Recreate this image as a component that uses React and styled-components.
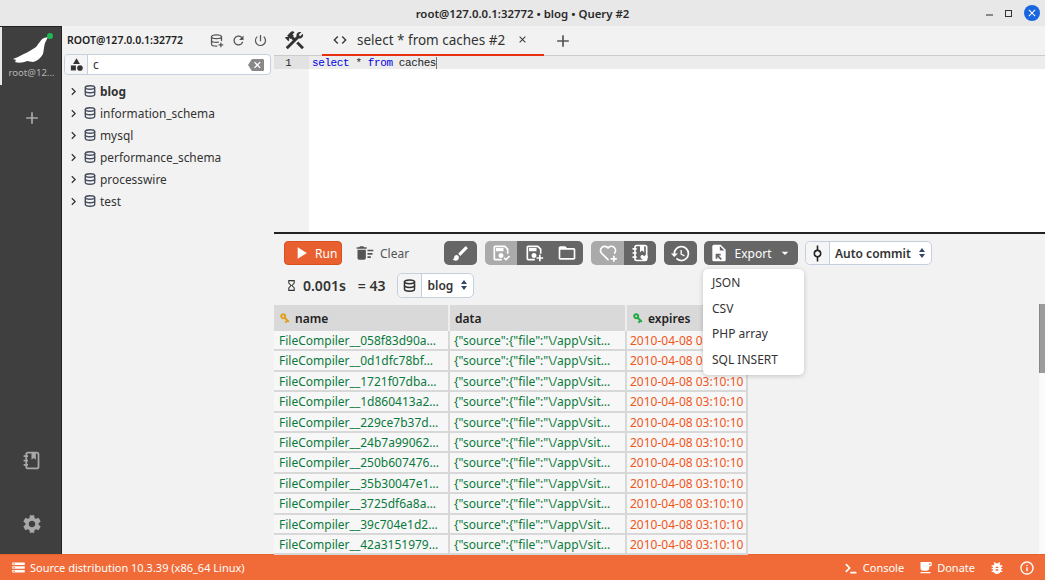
import React from 'react';
import styled, { createGlobalStyle } from 'styled-components';
import {
    MdCategory, MdBackspace, MdRefresh, MdPowerSettingsNew, MdConstruction, MdClose, MdCode, MdAdd,
    MdPlayArrow, MdDeleteSweep, MdBrush, MdOutlineFolderOpen, MdHistory, MdCommit,
    MdVpnKey, MdSettings, MdLocalCafe, MdBugReport, MdInfoOutline, MdChevronRight, MdArrowDropDown,
    MdHourglassEmpty, MdStorage,
} from 'react-icons/md';
import { TbDatabasePlus, TbDatabase, TbHeartPlus, TbTerminal } from 'react-icons/tb';

const GlobalStyle = createGlobalStyle`
    html, body { margin: 0; padding: 0; height: 100%; overflow: hidden; }
    body { font-family: "Noto Sans", sans-serif; color: #222; }
    * { box-sizing: border-box; }
`;

const Window = styled.div`
    width: 1045px;
    height: 580px;
    display: flex;
    flex-direction: column;
    background: #f2f2f2;
`;
const TitleBar = styled.div`
    height: 26px;
    flex: none;
    background: #e8e8e8;
    display: flex;
    align-items: center;
    justify-content: center;
    position: relative;
    font-size: 11.4px;
    font-weight: 600;
    color: #2a2a2a;
`;
const WinButtons = styled.div`
    position: absolute;
    right: 5px;
    top: 5px;
    display: flex;
    align-items: center;
    gap: 12px;
`;
const WinMin = styled.span`
    width: 7px;
    height: 2px;
    margin-top: 3px;
    background: #888;
`;
const WinMax = styled.span`
    width: 7px;
    height: 7px;
    border: 1.5px solid #333;
`;
const WinClose = styled.span`
    width: 16px;
    height: 16px;
    border-radius: 50%;
    background: #1a66e0;
    color: #fff;
    display: flex;
    align-items: center;
    justify-content: center;
`;
const Main = styled.div`
    flex: 1;
    min-height: 0;
    display: flex;
`;
const Rail = styled.div`
    width: 62px;
    flex: none;
    background: #3f3f3f;
    border-right: 1px solid #222;
    border-top: 1px solid #222;
    display: flex;
    flex-direction: column;
    align-items: center;
    color: #999;
`;
const RailConn = styled.div`
    width: 100%;
    height: 58px;
    border-left: 2px solid #e8e8e8;
    position: relative;
    display: flex;
    flex-direction: column;
    align-items: center;
    padding-top: 9px;
`;
const RailLabel = styled.div`
    font-size: 9.6px;
    color: #b5b5b5;
    margin-top: 2px;
`;
const OnlineDot = styled.span`
    position: absolute;
    top: 6px;
    left: 45px;
    width: 6px;
    height: 6px;
    border-radius: 50%;
    background: #1db954;
`;
const RailAdd = styled.div`
    margin: 23px 0 0 2px;
    color: #aaa;
    display: flex;
`;
const Spacer = styled.div`
    flex: 1;
`;
const RailIcon = styled.div`
    display: flex;
    margin: 0 0 ${p => p.$mb}px 2px;
    color: #a8a8a8;
`;
const Panel = styled.div`
    width: 212px;
    flex: none;
    display: flex;
    flex-direction: column;
    background: #f2f2f2;
`;
const PanelHead = styled.div`
    height: 28px;
    display: flex;
    align-items: center;
    padding: 0 6px 0 5px;
    font-size: 10.5px;
    font-weight: 600;
    color: #222;
`;
const PanelTitle = styled.div`
    flex: 1;
`;
const PanelTools = styled.div`
    display: flex;
    gap: 7px;
    color: #555;
`;
const Search = styled.div`
    height: 21px;
    margin: 0 3px 0 2px;
    border: 1px solid #c5d0de;
    border-radius: 4px;
    background: #fff;
    display: flex;
    align-items: center;
`;
const SearchAddon = styled.div`
    width: 23px;
    height: 100%;
    border-right: 1px solid #c5d0de;
    background: #f5f5f5;
    border-radius: 4px 0 0 4px;
    display: flex;
    align-items: center;
    justify-content: center;
    color: #333;
`;
const SearchValue = styled.div`
    flex: 1;
    padding-left: 5px;
    font-size: 12px;
    color: #333;
`;
const SearchClear = styled.div`
    display: flex;
    margin-right: 6px;
    color: #888;
`;
const DbList = styled.div`
    padding-top: 5px;
`;
const DbRow = styled.div`
    height: 22px;
    display: flex;
    align-items: center;
    padding-left: 4px;
    font-size: 11.9px;
    font-weight: ${p => (p.$bold ? 700 : 400)};
    color: #333;
`;
const DbIcon = styled.span`
    display: flex;
    margin: 0 3px 0 2px;
    color: #454d5d;
`;
const Content = styled.div`
    flex: 1;
    min-width: 0;
    display: flex;
    flex-direction: column;
    position: relative;
`;
const TabBar = styled.div`
    height: 30px;
    flex: none;
    display: flex;
    align-items: center;
    background: #f2f2f2;
    border-bottom: 1px solid #ccc;
`;
const ToolsTab = styled.div`
    width: 48px;
    padding-left: 9px;
    display: flex;
    color: #333;
`;
const QueryTab = styled.div`
    width: 222px;
    height: 30px;
    display: flex;
    align-items: center;
    border-bottom: 2px solid #e8320f;
    font-size: 13.5px;
    color: #333;
`;
const TabCode = styled.span`
    display: flex;
    margin: 0 9px 0 10px;
`;
const TabClose = styled.span`
    display: flex;
    margin-left: 12px;
    color: #333;
`;
const TabAdd = styled.div`
    display: flex;
    margin-left: 9px;
    color: #555;
`;
const Editor = styled.div`
    height: 178px;
    flex: none;
    background: #fff;
    display: flex;
    border-bottom: 2px solid #222;
`;
const Gutter = styled.div`
    width: 35px;
    background: #f2f2f2;
`;
const GutterLine = styled.div`
    height: 13px;
    background: #e2e2e2;
    text-align: center;
    padding-right: 6px;
    font-family: "Liberation Mono", monospace;
    font-size: 10.5px;
    line-height: 14px;
`;
const Code = styled.div`
    flex: 1;
`;
const CodeLine = styled.div`
    height: 13px;
    background: #ececec;
    padding-left: 3px;
    font-family: "Liberation Mono", monospace;
    font-size: 11px;
    letter-spacing: -0.4px;
    line-height: 15px;
    color: #222;
`;
const Keyword = styled.span`
    color: #0000e0;
`;
const Caret = styled.span`
    border-right: 1px solid #777;
`;
const Toolbar = styled.div`
    height: 38px;
    flex: none;
    display: flex;
    align-items: center;
    padding-left: 10px;
`;
const RunButton = styled.div`
    width: 58px;
    height: 24px;
    border-radius: 4px;
    background: #e8602f;
    border: 1px solid #d8501f;
    color: #fff;
    display: flex;
    align-items: center;
    padding-left: 6px;
    gap: 4px;
    font-size: 12px;
`;
const ClearButton = styled.div`
    display: flex;
    align-items: center;
    gap: 5px;
    margin-left: 13px;
    font-size: 12px;
    color: #555;
    width: 89px;
`;
const Group = styled.div`
    display: flex;
    margin-right: ${p => p.$mr ?? 8}px;
`;
const IconButton = styled.div`
    height: 24px;
    width: ${p => p.$w}px;
    background: ${p => (p.$off ? '#aaaaaa' : '#666666')};
    color: #fff;
    display: flex;
    align-items: center;
    justify-content: center;
    gap: 6px;
    font-size: 12px;
    &:first-child { border-radius: 5px 0 0 5px; }
    &:last-child { border-radius: 0 5px 5px 0; }
    &:only-child { border-radius: 5px; }
`;
const SelectGroup = styled.div`
    height: ${p => p.$h}px;
    display: flex;
    align-items: center;
    border: 1px solid #c5d0de;
    border-radius: 5px;
    background: #fff;
`;
const SelectAddon = styled.div`
    width: 24px;
    height: 100%;
    background: #f5f5f5;
    border-right: 1px solid #c5d0de;
    border-radius: 5px 0 0 5px;
    display: flex;
    align-items: center;
    justify-content: center;
`;
const SelectValue = styled.div`
    display: flex;
    align-items: center;
    padding: 0 5px 0 5px;
    font-size: 12px;
    font-weight: 600;
    gap: ${p => p.$gap}px;
    color: #333;
`;
const Vertical = styled.span`
    display: flex;
    transform: rotate(90deg);
`;
const MetaRow = styled.div`
    height: 26px;
    margin-bottom: 7px;
    flex: none;
    display: flex;
    align-items: center;
    padding-left: 11px;
    font-size: 14px;
    font-weight: 600;
    color: #333;
`;
const MetaItem = styled.div`
    display: flex;
    align-items: center;
    gap: ${p => p.$gap}px;
    margin-right: 12px;
`;
const Grid = styled.div`
    display: grid;
    grid-template-columns: 176px 177px 121px;
    width: 474px;
`;
const HeadCell = styled.div`
    height: 26px;
    background: #d9d9d9;
    border-right: 2px solid #eee;
    display: flex;
    align-items: center;
    gap: 4px;
    padding-left: 5px;
    font-size: 12px;
    font-weight: 600;
    color: #222;
    &:last-child { border-right: none; }
`;
const KeyIcon = styled.span`
    display: flex;
    color: ${p => p.$color};
    transform: rotate(45deg);
`;
const Cell = styled.div`
    height: 20.4px;
    line-height: 20px;
    background: #f7f7f7;
    border-right: 2px solid #d8d8d8;
    border-bottom: 2px solid #d8d8d8;
    padding-left: ${p => p.$pad ?? 5}px;
    font-size: 12px;
    white-space: nowrap;
    overflow: hidden;
    color: ${p => p.$color};
`;
const Menu = styled.div`
    position: absolute;
    left: 429px;
    top: 243px;
    width: 101px;
    height: 106px;
    background: #fff;
    border-radius: 5px;
    box-shadow: 0 1px 5px rgba(0, 0, 0, 0.2);
    padding-top: 1px;
    z-index: 2;
`;
const MenuItem = styled.div`
    height: 25.5px;
    line-height: 25.5px;
    padding-left: 9px;
    font-size: 12px;
    color: #333;
`;
const ScrollTrack = styled.div`
    position: absolute;
    right: 0;
    top: 278px;
    bottom: 0;
    width: 6px;
    background: #fafafa;
`;
const ScrollThumb = styled.div`
    height: 69px;
    background: #9c9c9c;
    border-left: 1px solid #888;
`;
const StatusBar = styled.div`
    height: 26px;
    flex: none;
    background: #f06b37;
    border-top: 1px solid #e8602f;
    color: #fff;
    display: flex;
    align-items: center;
    padding: 0 10px 0 11px;
    font-size: 11px;
`;
const StatusItem = styled.div`
    display: flex;
    align-items: center;
    gap: ${p => p.$gap ?? 4}px;
    margin-left: ${p => p.$ml ?? 0}px;
`;

const Seal = () => (
    <svg width="38" height="28" viewBox="0 0 38 28">
        <path fill="#fff" d="M0 23 5 21C10 18 18 15 23 11 26 8 27 4 31 2L35 1 33 5C31 8 31 14 30 18 28 22 24 25 20 26L14 25C10 27 5 27 2 26L3 24Z" />
    </svg>
);

// floppy with a small mark in the corner, check or plus
const SaveIcon = ({ mark }) => (
    <svg width="20" height="20" viewBox="0 0 24 24" fill="currentColor">
        <path d="M17 3H5C3.89 3 3 3.9 3 5V19C3 20.1 3.89 21 5 21H13V19H5V5H16.17L19 7.83V13H21V7L17 3M6 6H15V10H6V6M12 12C10.34 12 9 13.34 9 15S10.34 18 12 18 15 16.66 15 15 13.66 12 12 12Z" />
        {mark === 'plus'
            ? <path d="M18 14H20V17H23V19H20V22H18V19H15V17H18Z" />
            : <path d="M15 18.5 16.4 17 18 18.6 21.6 15 23 16.4 18 21.4Z" />}
    </svg>
);

const NotebookIcon = ({ filled, size }) => (
    <svg width={size} height={size} viewBox="0 0 24 24" fill="none" stroke="currentColor" strokeWidth="2">
        <rect x="6" y="3" width="14" height="18" rx="2" />
        <path d="M3 7H8M3 12H8M3 17H8" />
        <path fill="currentColor" stroke="none" d="M12 3H17V11L14.5 9 12 11Z" />
        {filled && <path fill="currentColor" stroke="none" d="M17 22 13 18C11.5 16 14 13.500 16 15L17 16 18 15C20 13.500 22.500 16 21 18Z" />}
    </svg>
);

const ExportIcon = () => (
    <svg width="20" height="20" viewBox="0 0 24 24">
        <path fill="#fff" d="M6 2C4.9 2 4 2.9 4 4V20C4 21.1 4.9 22 6 22H18C19.1 22 20 21.1 20 20V8L14 2H6Z" />
        <path fill="#666" d="M13 3.500 18.500 9H13ZM14 13V15H11.500L15.500 19 14 20.500 10 16.500V19H8V13Z" />
    </svg>
);

const SelectCarets = () => (
    <svg width="8" height="12" viewBox="0 0 8 12" fill="#34466a">
        <path d="M4 1 7 5H1ZM4 11 1 7H7Z" />
    </svg>
);

const databases = [
    { name: 'blog', bold: true },
    { name: 'information_schema' },
    { name: 'mysql' },
    { name: 'performance_schema' },
    { name: 'processwire' },
    { name: 'test' },
];
const hashes = ['058f83d90a', '0d1dfc78bf', '1721f07dba', '1d860413a2', '229ce7b37d', '24b7a99062', '250b607476', '35b30047e1', '3725df6a8a', '39c704e1d2', '42a3151979'];
const exportFormats = ['JSON', 'CSV', 'PHP array', 'SQL INSERT'];

const App = () => (
    <Window>
        <GlobalStyle />
        <TitleBar>
            root@127.0.0.1:32772 • blog • Query #2
            <WinButtons>
                <WinMin />
                <WinMax />
                <WinClose><MdClose size={12} /></WinClose>
            </WinButtons>
        </TitleBar>
        <Main>
            <Rail>
                <RailConn>
                    <Seal />
                    <OnlineDot />
                    <RailLabel>root@12...</RailLabel>
                </RailConn>
                <RailAdd><MdAdd size={20} /></RailAdd>
                <Spacer />
                <RailIcon $mb={42}><NotebookIcon size={21} /></RailIcon>
                <RailIcon $mb={19}><MdSettings size={22} /></RailIcon>
            </Rail>
            <Panel>
                <PanelHead>
                    <PanelTitle>ROOT@127.0.0.1:32772</PanelTitle>
                    <PanelTools>
                        <TbDatabasePlus size={15} />
                        <MdRefresh size={15} />
                        <MdPowerSettingsNew size={15} />
                    </PanelTools>
                </PanelHead>
                <Search>
                    <SearchAddon><MdCategory size={15} /></SearchAddon>
                    <SearchValue>c</SearchValue>
                    <SearchClear><MdBackspace size={16} /></SearchClear>
                </Search>
                <DbList>
                    {databases.map(db => (
                        <DbRow key={db.name} $bold={db.bold}>
                            <MdChevronRight size={15} />
                            <DbIcon><TbDatabase size={14} strokeWidth={2.4} /></DbIcon>
                            {db.name}
                        </DbRow>
                    ))}
                </DbList>
            </Panel>
            <Content>
                <TabBar>
                    <ToolsTab><MdConstruction size={23} /></ToolsTab>
                    <QueryTab>
                        <TabCode><MdCode size={16} /></TabCode>
                        select * from caches #2
                        <TabClose><MdClose size={11} /></TabClose>
                    </QueryTab>
                    <TabAdd><MdAdd size={20} /></TabAdd>
                </TabBar>
                <Editor>
                    <Gutter><GutterLine>1</GutterLine></Gutter>
                    <Code>
                        <CodeLine>
                            <Keyword>select</Keyword> * <Keyword>from</Keyword> <Caret>caches</Caret>
                        </CodeLine>
                    </Code>
                </Editor>
                <Toolbar>
                    <RunButton><MdPlayArrow size={20} />Run</RunButton>
                    <ClearButton><MdDeleteSweep size={20} />Clear</ClearButton>
                    <Group><IconButton $w={33}><MdBrush size={19} /></IconButton></Group>
                    <Group>
                        <IconButton $off $w={32}><SaveIcon mark="check" /></IconButton>
                        <IconButton $w={33}><SaveIcon mark="plus" /></IconButton>
                        <IconButton $w={33}><MdOutlineFolderOpen size={20} /></IconButton>
                    </Group>
                    <Group>
                        <IconButton $off $w={33}><TbHeartPlus size={20} /></IconButton>
                        <IconButton $w={32}><NotebookIcon filled size={20} /></IconButton>
                    </Group>
                    <Group $mr={7}><IconButton $w={33}><MdHistory size={21} /></IconButton></Group>
                    <Group $mr={7}>
                        <IconButton $w={94}><ExportIcon />Export<MdArrowDropDown size={16} /></IconButton>
                    </Group>
                    <SelectGroup $h={24}>
                        <SelectAddon><Vertical><MdCommit size={19} /></Vertical></SelectAddon>
                        <SelectValue $gap={7}>Auto commit<SelectCarets /></SelectValue>
                    </SelectGroup>
                </Toolbar>
                <MetaRow>
                    <MetaItem $gap={5}><MdHourglassEmpty size={13} />0.001s</MetaItem>
                    <MetaItem $gap={7}>= 43</MetaItem>
                    <SelectGroup $h={25}>
                        <SelectAddon><TbDatabase size={15} strokeWidth={2.4} /></SelectAddon>
                        <SelectValue $gap={7}>blog<SelectCarets /></SelectValue>
                    </SelectGroup>
                </MetaRow>
                <Grid>
                    <HeadCell><KeyIcon $color="#e0a020"><MdVpnKey size={12} /></KeyIcon>name</HeadCell>
                    <HeadCell>data</HeadCell>
                    <HeadCell><KeyIcon $color="#22aa44"><MdVpnKey size={12} /></KeyIcon>expires</HeadCell>
                    {hashes.map(hash => (
                        <React.Fragment key={hash}>
                            <Cell $color="#0a7a3c">FileCompiler__{hash}…</Cell>
                            <Cell $color="#0a7a3c" $pad={4}>{'{"source":{"file":"\\/app\\/sit…'}</Cell>
                            <Cell $color="#f0561a" $pad={3}>2010-04-08 03:10:10</Cell>
                        </React.Fragment>
                    ))}
                </Grid>
                <Menu>
                    {exportFormats.map(format => <MenuItem key={format}>{format}</MenuItem>)}
                </Menu>
                <ScrollTrack><ScrollThumb /></ScrollTrack>
            </Content>
        </Main>
        <StatusBar>
            <StatusItem><MdStorage size={15} />Source distribution 10.3.39 (x86_64 Linux)</StatusItem>
            <Spacer />
            <StatusItem><TbTerminal size={16} strokeWidth={2.6} />Console</StatusItem>
            <StatusItem $ml={14}><MdLocalCafe size={15} />Donate</StatusItem>
            <StatusItem $ml={14}><MdBugReport size={16} /></StatusItem>
            <StatusItem $ml={14}><MdInfoOutline size={16} /></StatusItem>
        </StatusBar>
    </Window>
);

export default App;
